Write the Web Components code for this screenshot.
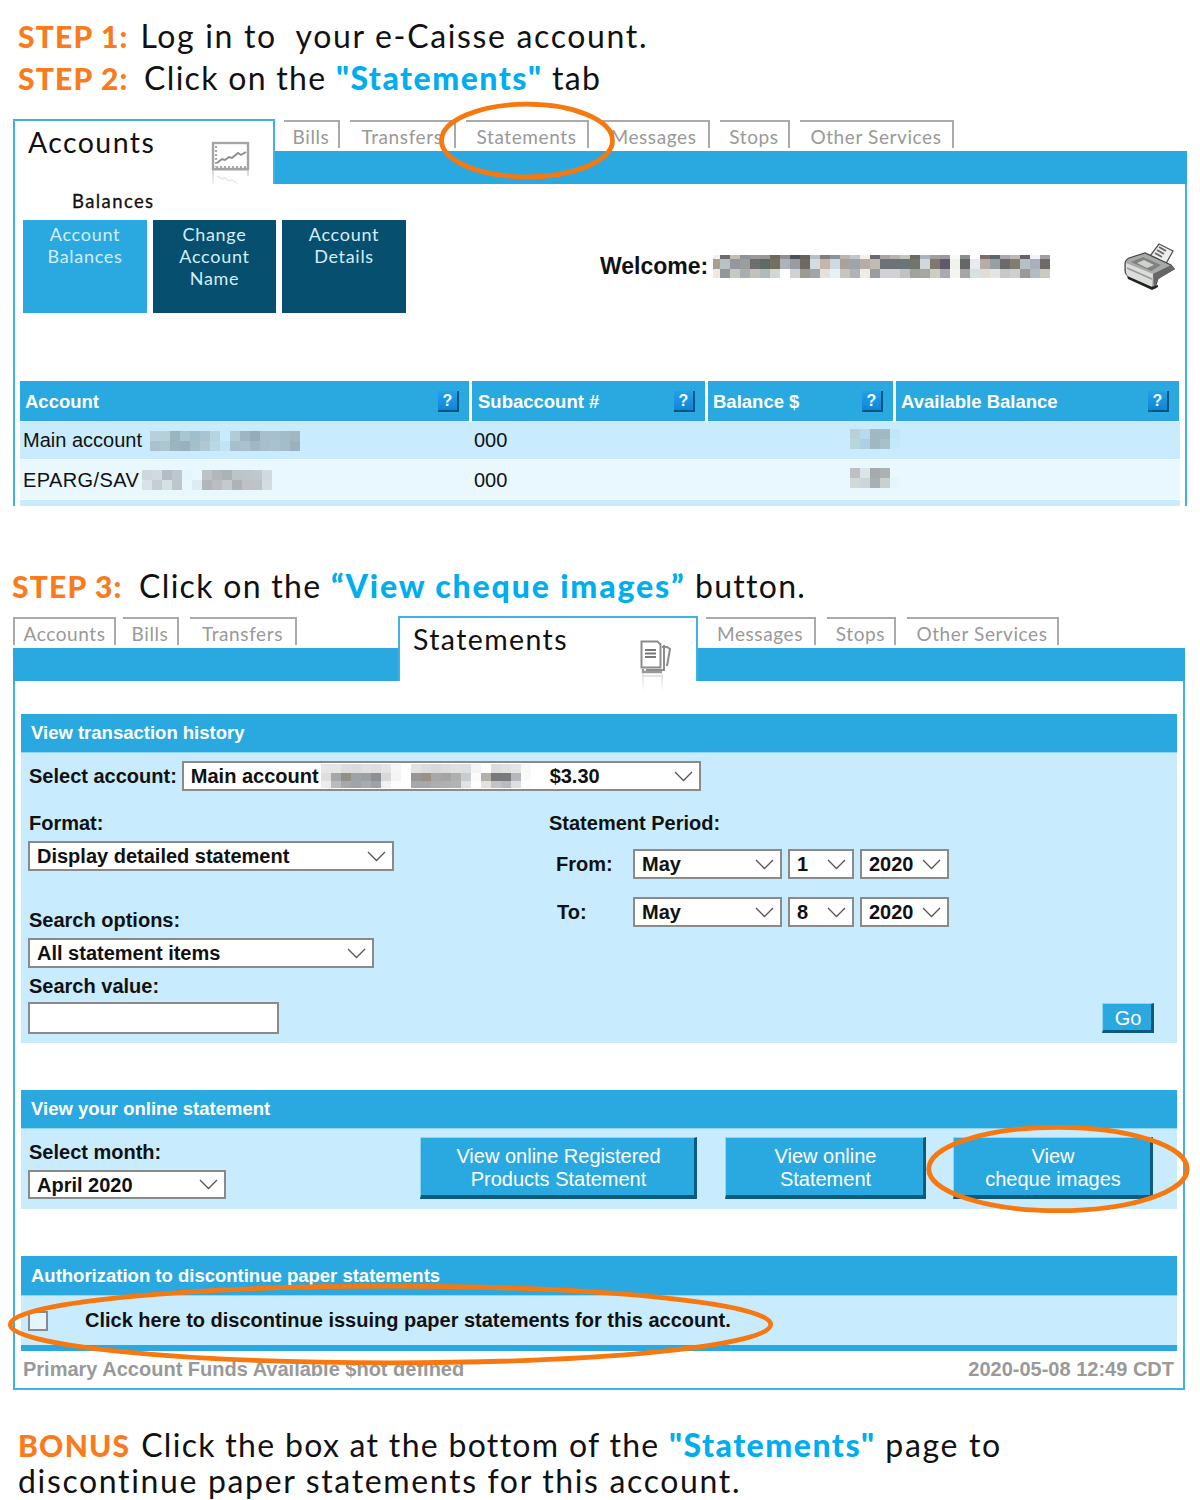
<!DOCTYPE html>
<html lang="en">
<head>
<meta charset="utf-8">
<title>e-Caisse statements</title>
<style>
  html, body { margin: 0; background: #fff; }
  body { width: 1200px; height: 1500px; overflow: hidden; font-family: "Liberation Sans", Arial, sans-serif; }
</style>
</head>
<body>
<step-line style="margin-left:18px;padding-top:15px" label="STEP 1:">Log in to&nbsp; your e-Caisse account.</step-line>
<step-line style="margin-left:18px;letter-spacing:1.3px;--gap:6px" label="STEP 2:">Click on the <em>"Statements"</em> tab</step-line>

<bank-panel style="margin:20px 0 0 13px;width:1174px">
  <tab-strip slot="tabs">
    <active-tab slot="active" style="width:262px" label="Accounts"><chart-icon></chart-icon></active-tab>
    <strip-tab slot="after" style="margin-left:9px;width:56px">Bills</strip-tab>
    <strip-tab slot="after" style="width:106px">Transfers</strip-tab>
    <strip-tab slot="after" style="width:123px">Statements</strip-tab>
    <strip-tab slot="after" style="width:111px">Messages</strip-tab>
    <strip-tab slot="after" style="width:70px">Stops</strip-tab>
    <strip-tab slot="after" style="width:154px">Other Services</strip-tab>
  </tab-strip>
  <accounts-view></accounts-view>
</bank-panel>

<step-line style="margin:59px 0 0 12px;letter-spacing:1.3px;--gap:7px;--quote:1.85px" label="STEP 3:">Click on the <em>“View cheque images”</em> button.</step-line>

<bank-panel style="margin:9px 0 0 13px;width:1172px" closed>
  <tab-strip slot="tabs" style="--before:385px">
    <strip-tab slot="before" style="margin-left:0;width:103px;border-left:2px solid #aaa">Accounts</strip-tab>
    <strip-tab slot="before" style="margin-left:7px;width:56px">Bills</strip-tab>
    <strip-tab slot="before" style="margin-left:11px;width:107px">Transfers</strip-tab>
    <active-tab slot="active" style="width:300px" label="Statements"><doc-icon></doc-icon></active-tab>
    <strip-tab slot="after" style="margin-left:8px;width:110px">Messages</strip-tab>
    <strip-tab slot="after" style="margin-left:11px;width:69px">Stops</strip-tab>
    <strip-tab slot="after" style="margin-left:11px;width:152px">Other Services</strip-tab>
  </tab-strip>
  <statements-view></statements-view>
</bank-panel>

<step-line style="margin:37px 0 0 18px;line-height:36px;--gap:1px" label="BONUS"><span style="letter-spacing:1.3px">Click the box at the bottom of the </span><em>"Statements"</em> page to<br>discontinue paper statements for this account.</step-line>

<ring-mark style="left:441px;top:103px;width:172px;height:75px"></ring-mark>
<ring-mark style="left:928px;top:1126px;width:260px;height:86px"></ring-mark>
<ring-mark style="left:8px;top:1285px;width:765px;height:79px"></ring-mark>

<script>
// small helper, every element here is just css + markup in an open shadow root
const define = (name, css, html, init) => {
  customElements.define(name, class extends HTMLElement {
    constructor() {
      super();
      this.attachShadow({ mode: "open" }).innerHTML = `<style>${css}</style>${html}`;
    }
    connectedCallback() {
      if (init) init.call(this);
    }
  });
};

const SANS = `"Liberation Sans", Arial, sans-serif`;
const ROUND = `Lato, "Noto Sans", sans-serif`;
const BLUE = "#2aa9e1";
const PALE = "#c8ecfe";
const DARK = "#064f6e";

define("step-line", `
  :host { display: block; font: 400 32px/42px ${ROUND}; letter-spacing: 1.65px; color: #111; white-space: nowrap; }
  b { color: #f97b1c; font-weight: 900; font-size: 30px; letter-spacing: 1.2px; margin-right: var(--gap, 2px); }
  ::slotted(em) { color: #00aeef; font-style: normal; font-weight: 900; letter-spacing: var(--quote, 1.5px); }
`, `<b></b> <slot></slot>`, function () {
  this.shadowRoot.querySelector("b").textContent = this.getAttribute("label");
});

define("bank-panel", `
  :host { display: block; }
  .body { border: solid #3fb1e6; border-width: 0 2px; background: #fff; }
  :host([closed]) .body { border-bottom-width: 2px; }
`, `<slot name="tabs"></slot><div class="body"><slot></slot></div>`);

define("tab-strip", `
  :host { display: flex; height: 65px; }
  .side { display: flex; flex-direction: column; flex: none; width: var(--before); }
  .side.after { flex: 1; width: auto; }
  .row { display: flex; height: 32px; padding-top: 1px; box-sizing: border-box; }
  .bar { height: 33px; background: ${BLUE}; }
`, `
  <div class="side"><div class="row"><slot name="before"></slot></div><div class="bar"></div></div>
  <slot name="active"></slot>
  <div class="side after"><div class="row"><slot name="after"></slot></div><div class="bar"></div></div>
`, function () {
  // no "before" tabs on the accounts panel, drop the empty column
  if (!this.querySelector('[slot="before"]')) this.shadowRoot.querySelector(".side").remove();
});

define("strip-tab", `
  :host {
    display: block; box-sizing: border-box; height: 28px; margin-left: 10px;
    border-top: 2px solid #aaa; border-right: 2px solid #aaa;
    font: 400 19px/29px ${ROUND}; letter-spacing: .6px; color: #999; text-align: center; white-space: nowrap;
  }
`, `<slot></slot>`);

define("active-tab", `
  :host {
    display: flex; box-sizing: border-box; height: 65px; position: relative; background: #fff;
    border: solid #3fb1e6; border-width: 2px 2px 0 2px;
  }
  span { font: 400 28.500px/30px ${ROUND}; letter-spacing: 1.4px; color: #111; padding: 6px 0 0 13px; }
  slot { display: block; }
  .icon { position: absolute; right: 22px; top: 19px; }
`, `<span></span><div class="icon"><slot></slot></div>`, function () {
  this.shadowRoot.querySelector("span").textContent = this.getAttribute("label");
});

define("chart-icon", `:host { display: block; width: 40px; height: 50px; } svg { display: block; filter: blur(.5px); }`, `
  <svg width="40" height="50" viewBox="0 0 40 50" fill="none">
    <defs><linearGradient id="f" x1="0" y1="0" x2="0" y2="1"><stop offset="0" stop-color="#fff" stop-opacity=".6"/><stop offset="1" stop-color="#fff" stop-opacity="0"/></linearGradient>
    <mask id="m"><rect x="0" y="30" width="40" height="20" fill="url(#f)"/></mask></defs>
    <rect x="2" y="3" width="35" height="26" stroke="#a4a4a4" stroke-width="2.4"/>
    <path d="M5 6v21M5 27h30" stroke="#aaa" stroke-width="2.2" stroke-dasharray="2 2"/>
    <path d="M6 23l5-4 3 1 4-3 3 1 6-5 3 2 5-3" stroke="#8c8c8c" stroke-width="1.9"/>
    <g mask="url(#m)">
      <path d="M2 30h35v6M2 30v14" stroke="#bbb" stroke-width="2"/>
      <path d="M6 36l5 3 3-1 4 3 3-1 6 4" stroke="#aaa" stroke-width="1.4"/>
    </g>
  </svg>`);

define("doc-icon", `:host { display: block; width: 32px; height: 52px; margin: 3px 2px 0 0; } svg { display: block; filter: blur(.5px); }`, `
  <svg width="32" height="52" viewBox="0 0 32 52" fill="none">
    <defs><linearGradient id="f" x1="0" y1="0" x2="0" y2="1"><stop offset="0" stop-color="#fff" stop-opacity=".5"/><stop offset="1" stop-color="#fff" stop-opacity="0"/></linearGradient>
    <mask id="m"><rect x="0" y="33" width="32" height="19" fill="url(#f)"/></mask></defs>
    <path d="M22 7h5l3 2-3 17M24 5v25H6" stroke="#8c8c8c" stroke-width="2"/>
    <path d="M3 29v3h19" stroke="#999" stroke-width="2.4"/>
    <path d="M1.500 1.500h16l3 3v23h-19z" fill="#fff" stroke="#8c8c8c" stroke-width="2"/>
    <path d="M5 10h11M5 13.500h11M5 17h11" stroke="#777" stroke-width="1.9"/>
    <g mask="url(#m)"><path d="M3 34v16M22 34v16M3 36h19" stroke="#bbb" stroke-width="2"/></g>
  </svg>`);

define("print-icon", `:host { display: block; width: 54px; height: 50px; } svg { display: block; filter: blur(.5px); }`, `
  <svg width="54" height="50" viewBox="0 0 54 50">
    <path d="M27 16l9-12 14 7-10 18z" fill="#eee" stroke="#555" stroke-width="1.3"/>
    <path d="M32 13l7 4M34 10l7 4M36 7l7 4M30 17l6 3" stroke="#666" stroke-width="1.8"/>
    <path d="M2 24q0-4 4-6l16-5 26 12 3 4-16 9-3 10-24-10q-6-3-6-8z" fill="#a8aaa8" stroke="#444" stroke-width="1.2"/>
    <path d="M3 23l27 11-1 13L6 37q-3-2-3-6z" fill="#dcdedc"/>
    <path d="M8 22l12-5 18 8-10 6z" fill="#7e8280"/>
    <path d="M14 23l7-3 10 5-7 3z" fill="#d0d2d0"/>
    <path d="M30 34l18-9 4 4-18 11-3 8z" fill="#666"/>
    <path d="M4 36l25 11 6-2v2l-6 3L5 39z" fill="#222"/>
    <path d="M4 28l25 11" stroke="#999" stroke-width="1.6"/>
  </svg>`);

// pixelated bits hiding the member's details
define("pixel-blur", `
  :host { display: inline-block; vertical-align: top; flex: none; }
  .g { display: grid; }
`, `<div class="g"></div>`, function () {
  const grid = this.shadowRoot.querySelector(".g");
  const rows = this.getAttribute("data").split("|").map(r => r.trim().split(/\s+/));
  const heights = (this.getAttribute("heights") || "10 10").split(" ");
  const first = this.getAttribute("first");
  grid.style.gridTemplateColumns = (first ? first + "px " : "10px ") + `repeat(${rows[0].length - 1}, 10px)`;
  grid.style.gridTemplateRows = heights.map(h => h + "px").join(" ");
  rows.forEach(row => row.forEach(color => {
    const d = document.createElement("div");
    d.style.background = "#" + color;
    grid.appendChild(d);
  }));
});

define("help-chip", `
  :host {
    display: block; box-sizing: border-box; width: 21px; height: 21px; margin-left: auto; margin-right: 10px;
    background: linear-gradient(#23a0ea, #0f86d8); border-right: 2px solid #07547e; border-bottom: 2px solid #07547e;
    color: #fff; font: 700 16px/19px ${SANS}; text-align: center; flex: none;
  }
`, `?`);

define("head-cell", `
  :host {
    display: flex; align-items: center; height: 40px; background: ${BLUE}; color: #fff; padding-left: 5px;
    font: 700 18.500px/40px ${SANS}; box-sizing: border-box; white-space: nowrap;
  }
  span { padding-top: 2px; line-height: 38px; }
`, `<span><slot></slot></span><help-chip></help-chip>`);

define("acct-row", `
  :host {
    display: grid; grid-template-columns: 449px 233px 185px 284px; column-gap: 3px; align-items: center; margin-top: 1px;
    font: 400 20px/24px ${SANS}; color: #111; background: ${PALE}; white-space: nowrap;
  }
  :host([alt]) { background: #e9f8ff; }
  .a { display: flex; align-items: center; padding-left: 3px; }
  .b { padding-left: 2px; }
  .c { padding-left: 142px; }
`, `
  <div class="a"><slot name="name"></slot></div>
  <div class="b"><slot name="sub"></slot></div>
  <div class="c"><slot name="bal"></slot></div>
  <div></div>
`);

define("side-link", `
  :host {
    display: block; box-sizing: border-box; width: 124px; height: 93px; background: ${DARK}; color: #d4eefa;
    font: 400 18px/22px ${ROUND}; letter-spacing: .7px; text-align: center; padding-top: 3px;
  }
  :host([on]) { background: ${BLUE}; }
`, `<slot></slot>`);

define("accounts-view", `
  :host { display: block; height: 322px; overflow: hidden; }
  .title { font: 400 18.500px/22px ${ROUND}; letter-spacing: 1.4px; -webkit-text-stroke: .3px #111; color: #111; padding: 6px 0 0 57px; }
  .top { display: flex; align-items: center; margin: 8px 10px 0 8px; height: 93px; }
  .nav { display: flex; gap: 6px; }
  .welcome { display: flex; align-items: center; margin-left: 194px; font: 700 23px/26px ${SANS}; color: #111; }
  .welcome span { padding-bottom: 2px; }
  .welcome pixel-blur { margin-left: 5px; }
  print-icon { margin-left: auto; margin-top: -4px; margin-right: -2px; }
  .grid { margin: 68px 5px 0; }
  .heads { display: grid; grid-template-columns: 449px 233px 185px 283px; column-gap: 3px; }
  .r1 { height: 37px; } .r2 { height: 39px; } .r3 { height: 12px; }
  .r1 span { display: block; padding-bottom: 2px; }
  .r2 span { display: block; }
`, `
  <div class="title">Balances</div>
  <div class="top">
    <div class="nav">
      <side-link on>Account<br>Balances</side-link>
      <side-link style="width:123px">Change<br>Account<br>Name</side-link>
      <side-link>Account<br>Details</side-link>
    </div>
    <div class="welcome"><span>Welcome:</span><pixel-blur first="7" heights="4 10 9" data="
      f5efe6 6a6e72 c4bdb4 8a9499 9a9a98 989896 6e6a58 8f8e92 4a5158 66625a b5c0c8 857d78 8a929c bcb5ab c2c6d0 f5f0ea 686a70 a9a49c b5b5b0 c4c6be 6e6a60 a9b5c0 a0a0a0 9c9aa0 f8fafa 8a8e8c ffffff 7a6e66 5a666c aaa8aa bcb9b6 666266 eef4fa a0a0a0|
      a89e92 b8c2c4 94989c 9c9e9e 6e6e70 5e6a68 73705f aeb2bc 9a9ca2 6e6a60 d5dce0 c6b5aa cfd9e6 a8a298 a0a4aa b5aea6 bfbcb2 6e7276 6e7276 68767a 74746e cfd8de 80786c 5e5a6c f0f2ee 666868 e8ecf2 b8aca6 96a0a4 6a6a6a 827c72 b6c0c6 aab0ba 6e6a66|
      f0e9df 94979a c6c8c4 a8aeb0 c4bfb8 afbabc d5d8d2 ffffff d0d1d4 9c9a92 a2a4aa e5e0da e9eff8 c6c6be b0b4b8 f0ebe6 9a9c9e d0d2d6 d0d2d6 c2c2c6 a4a09a a6a6a0 cfccc4 aaa8b0 f4f5f2 a6a6a6 d8e0e4 e2dcd8 e6e4e0 c8c8c8 ccd0d2 9a9a98 b4bcc2 cacac2"></pixel-blur></div>
    <print-icon></print-icon>
  </div>
  <div class="grid">
    <div class="heads">
      <head-cell>Account</head-cell><head-cell style="padding-left:6px">Subaccount #</head-cell><head-cell>Balance $</head-cell><head-cell>Available Balance</head-cell>
    </div>
    <acct-row class="r1">
      <span slot="name">Main account</span>
      <pixel-blur slot="name" style="margin-left:8px" data="b8d0dc b6cfd8 98b4bd a8c6cf a0bfcc a8c4d0 b5d5e2 c8ecfe b0ccd8 9db6c0 92adb8 a8c0cc a6c0cc a4bcc8 a0b8c4|a9c2ce acc6d0 9ab5c0 98b2bd a5bfca b0c8d4 b8d8e6 c0e4f4 a6c0cc a8c2ce 9fb8c4 a6bfcb a8c2ce a4bdc9 9bb2be"></pixel-blur>
      <span slot="sub">000</span>
      <pixel-blur slot="bal" data="b8d0d8 b6dcec a0b8c2 a0b8c2 c0e6f8|b8d6de aecfe0 a0b8c2 a8c0ca c2e8fa"></pixel-blur>
    </acct-row>
    <acct-row class="r2" alt>
      <span slot="name" style="letter-spacing:.4px">EPARG/SAV</span>
      <pixel-blur slot="name" style="margin-left:3px" data="cdd8de d0dae0 b4bcc6 bcc8cc e4f5fc e9f8ff bcc2c6 b0b8bc aab4b8 bcc4c8 bcc6ca c0c8cc d0dade|d8e3e8 c4ced4 d4e0e6 bcc6cc e9f8ff dcecf2 b0b6ba b8bec2 c4cacf acb4b8 bcc2c6 bcc4c8 d4dce0"></pixel-blur>
      <span slot="sub">000</span>
      <pixel-blur slot="bal" data="bcc0c2 d8e6ec a4aaae acb2b4 e9f8ff|d0d8d8 ccd6da a8b0b6 c8d0d0 e4f5fc"></pixel-blur>
    </acct-row>
    <acct-row class="r3"></acct-row>
  </div>
`);

define("drop-down", `
  :host {
    display: flex; align-items: center; box-sizing: border-box; height: 30px; background: #fff; flex: none;
    border: 2px solid #8a8a8a; padding-left: 7px; font: 700 20px/26px ${SANS}; color: #111; white-space: nowrap;
  }
  slot { display: contents; }
  svg { margin-left: auto; margin-right: 6px; flex: none; }
`, `<slot></slot><svg width="19" height="11" viewBox="0 0 19 11" fill="none"><path d="M1 1l8.500 8.500L18 1" stroke="#555" stroke-width="1.300"/></svg>`);

define("blue-button", `
  :host {
    display: flex; align-items: center; justify-content: center; box-sizing: border-box; flex: none; background: ${BLUE};
    border: solid #8fd6f4; border-width: 1px 0 0 1px; border-right: 3px solid #0c5a7e; border-bottom: 4px solid #0c5a7e;
    color: #fff; font: 400 20px/23px ${SANS}; text-align: center; padding: 3px 0 0 2px;
  }
`, `<div><slot></slot></div>`);

define("form-section", `
  :host { display: block; }
  .head {
    height: 38px; background: ${BLUE}; border-bottom: 1px solid #8fd6f4; padding-left: 10px;
    color: #fff; font: 700 18.500px/38px ${SANS}; white-space: nowrap;
  }
  :host([tall]) .head { height: 39px; line-height: 40px; }
  .body { background: ${PALE}; }
`, `<div class="head"></div><div class="body"><slot></slot></div>`, function () {
  this.shadowRoot.querySelector(".head").textContent = this.getAttribute("heading");
});

define("history-form", `
  :host { display: block; padding: 8px 23px 9px 7px; font: 700 20px/24px ${SANS}; color: #111; height: 273px; }
  .acct { display: flex; align-items: center; height: 30px; padding-left: 1px; }
  .acct span { margin-right: 5px; }
  .cols { display: flex; margin-top: 20px; height: 223px; }
  .left { width: 521px; flex: none; }
  .lbl { padding-left: 1px; }
  .lbl.first { margin-bottom: 6px; }
  .right { flex: 1; display: flex; flex-direction: column; }
  .period { display: flex; gap: 6px; align-items: center; margin-bottom: 18px; }
  .period b { width: 84px; box-sizing: border-box; padding-left: 7px; margin-right: -6px; }
  input { display: block; box-sizing: border-box; width: 251px; height: 32px; margin: 4px 0 0; border: 2px solid #8a8a8a; background: #fff; padding: 0; }
  blue-button { margin: auto 0 1px auto; width: 52px; height: 30px; border-bottom-width: 3px; }
`, `
  <div class="acct"><span>Select account:</span>
    <drop-down style="width:519px">Main account<pixel-blur style="margin-left:2px" heights="9 8 7" data="e6e6e6 e4e6e6 dcdcdc dadcdc e0e0e0 dedede e4e4e4 f6f6f6 ffffff e4e2e0 dcdcdc d8d8d8 dcdcdc e0e0e0 dcdee0 f4f4f4 ffffff dcdcdc e0e0e0 e4e4e4 f8f8f8|dedede a4a8aa 938e86 9ea2a6 9aa0a4 8c9094 d8d8d8 f4f4f4 ffffff 9a9696 9a9086 a8a8a8 a4a4a4 aeb0ae c8ccd0 fcfcfc b4b0ac 7a7a7c 787a7c b4b8bc fafafa|ececec b8bcbe a8a8a8 a0a4a8 a8acb0 9ea2a6 f0f0f0 fcfcfc ffffff a4a8aa a8a8ac acaeb0 b0b0b0 b2b4b4 e0e2e4 ffffff e4e0dc c0c4c8 b8bcc0 dcdee0 fdfdfd"></pixel-blur><span style="margin:0 0 0 19px">$3.30</span></drop-down>
  </div>
  <div class="cols">
    <div class="left">
      <div class="lbl first">Format:</div>
      <drop-down style="width:366px">Display detailed statement</drop-down>
      <div class="lbl first" style="margin-top:37px">Search options:</div>
      <drop-down style="width:346px">All statement items</drop-down>
      <div class="lbl" style="margin-top:6px">Search value:</div>
      <input type="text" aria-label="Search value">
    </div>
    <div class="right">
      <div style="margin-bottom:14px">Statement Period:</div>
      <div class="period"><b>From:</b><drop-down style="width:149px">May</drop-down><drop-down style="width:66px">1</drop-down><drop-down style="width:89px">2020</drop-down></div>
      <div class="period"><b style="padding-left:8px">To:</b><drop-down style="width:149px">May</drop-down><drop-down style="width:66px">8</drop-down><drop-down style="width:89px">2020</drop-down></div>
      <blue-button>Go</blue-button>
    </div>
  </div>
`);

define("online-form", `
  :host { display: flex; height: 80px; box-sizing: border-box; padding-left: 7px; font: 700 20px/24px ${SANS}; color: #111; }
  .left { width: 392px; flex: none; padding-top: 11px; box-sizing: border-box; }
  .left div { padding-left: 1px; margin-bottom: 6px; }
  .btns { display: flex; margin-top: 8px; height: 62px; }
`, `
  <div class="left"><div>Select month:</div><drop-down style="width:198px;height:29px">April 2020</drop-down></div>
  <div class="btns">
    <blue-button style="width:277px">View online Registered<br>Products Statement</blue-button>
    <blue-button style="width:201px;margin-left:28px">View online<br>Statement</blue-button>
    <blue-button style="width:200px;margin-left:27px">View<br>cheque images</blue-button>
  </div>
`);

define("paper-form", `
  :host { display: flex; align-items: center; height: 49px; padding-left: 7px; font: 700 20px/24px ${SANS}; color: #111; white-space: nowrap; }
  i { display: block; box-sizing: border-box; width: 20px; height: 20px; margin: 0 37px 0 0; border: 2px solid #8a8a8a; background: #e4f5fd; }
  span { padding-bottom: 2px; }
`, `<i></i><span>Click here to discontinue issuing paper statements for this account.</span>`);

define("statements-view", `
  :host { display: block; padding: 33px 6px 0; }
  form-section + form-section { margin-top: 47px; }
  .bar { height: 6px; background: ${BLUE}; }
  .foot {
    display: flex; justify-content: space-between; align-items: center; height: 37px; padding: 0 3px 2px 2px; box-sizing: border-box;
    color: #999; font: 700 20px/24px ${SANS}; white-space: nowrap;
  }
`, `
  <form-section heading="View transaction history"><history-form></history-form></form-section>
  <form-section heading="View your online statement"><online-form></online-form></form-section>
  <form-section tall heading="Authorization to discontinue paper statements"><paper-form></paper-form></form-section>
  <div class="bar"></div>
  <div class="foot"><span>Primary Account Funds Available $not defined</span><span>2020-05-08 12:49 CDT</span></div>
`);

define("ring-mark", `
  :host { position: absolute; display: block; pointer-events: none; }
  svg { display: block; width: 100%; height: 100%; overflow: visible; }
  ellipse { fill: none; stroke: #f7780f; stroke-width: 4.800; vector-effect: non-scaling-stroke; }
`, `<svg viewBox="0 0 100 100" preserveAspectRatio="none"><ellipse cx="50" cy="50" rx="49.700" ry="48.500"/></svg>`);
</script>
</body>
</html>
